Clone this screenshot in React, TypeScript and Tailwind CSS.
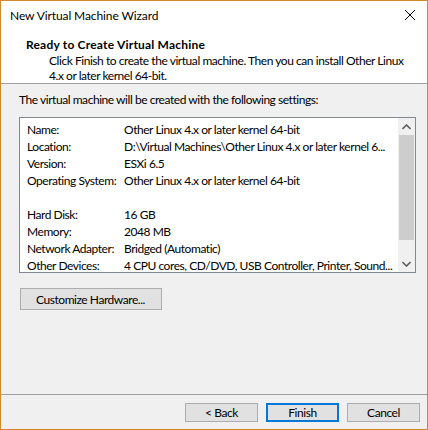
import React from "react";

const rows: [string, string][] = [
  ["Name:", "Other Linux 4.x or later kernel 64-bit"],
  ["Location:", "D:\\Virtual Machines\\Other Linux 4.x or later kernel 6..."],
  ["Version:", "ESXi 6.5"],
  ["Operating System:", "Other Linux 4.x or later kernel 64-bit"],
  ["", ""],
  ["Hard Disk:", "16 GB"],
  ["Memory:", "2048 MB"],
  ["Network Adapter:", "Bridged (Automatic)"],
  ["Other Devices:", "4 CPU cores, CD/DVD, USB Controller, Printer, Sound..."],
];

export default function App() {
  return (
    <div
      className="w-[428px] h-[430px] border border-[#cf8a2e] bg-[#f0f0f0] flex flex-col text-[12px] text-black tracking-[-0.45px]"
      style={{ fontFamily: '"Segoe UI", Lato, "Noto Sans", sans-serif' }}
    >
      <div className="bg-white border-b border-[#a0a0a0] h-[83px] flex flex-col">
        <div className="h-[29px] flex items-center justify-between pl-[9px] pr-[9px]">
          <span className="leading-[15px] tracking-[-0.1px]">New Virtual Machine Wizard</span>
          <svg width="12" height="12" viewBox="0 0 12 12" className="mr-[2px]">
            <path d="M1 1 L11 11 M11 1 L1 11" stroke="#000" strokeWidth="1" />
          </svg>
        </div>
        <div className="pl-[25px] mt-[8px] font-bold leading-[15px] tracking-[0.2px]">Ready to Create Virtual Machine</div>
        <div className="pl-[48px] pr-[20px] leading-[15px] mt-[1px]">
          Click Finish to create the virtual machine. Then you can install Other Linux 4.x or later kernel 64-bit.
        </div>
      </div>
      <div className="pl-[18px] mt-[8px] leading-[15px]">The virtual machine will be created with the following settings:</div>
      <div className="ml-[18px] mr-[11px] mt-[10px] h-[156px] border border-[#828790] bg-white flex">
        <div className="flex-1 pt-[3px] pl-[7px] overflow-hidden">
          {rows.map(([k, v], i) => (
            <div key={i} className="h-[17px] flex items-center leading-[15px] whitespace-nowrap">
              <span className="w-[97px] shrink-0">{k}</span>
              <span>{v}</span>
            </div>
          ))}
        </div>
        <div className="w-[17px] bg-[#f0f0f0] flex flex-col">
          <div className="h-[17px] flex items-center justify-center">
            <svg width="9" height="6" viewBox="0 0 9 6">
              <path d="M0.5 5 L4.5 1 L8.5 5" stroke="#606060" strokeWidth="1.6" fill="none" />
            </svg>
          </div>
          <div className="h-[105px] mx-[1px] bg-[#cdcdcd]" />
          <div className="flex-1" />
          <div className="h-[17px] flex items-center justify-center">
            <svg width="9" height="6" viewBox="0 0 9 6">
              <path d="M0.5 1 L4.5 5 L8.5 1" stroke="#606060" strokeWidth="1.6" fill="none" />
            </svg>
          </div>
        </div>
      </div>
      <div className="ml-[19px] mt-[15px]">
        <button className="w-[142px] h-[22px] border border-[#adadad] bg-[#e1e1e1] flex items-center pl-[15px] leading-[15px] whitespace-nowrap">
          Customize Hardware...
        </button>
      </div>
      <div className="flex-1" />
      <div className="border-t border-[#a0a0a0] h-[35px] flex items-start justify-end gap-[8px] pr-[7px] pt-[8px]">
        <button className="w-[73px] h-[19px] border border-[#adadad] bg-[#e1e1e1] leading-[15px] flex items-center justify-center">
          &lt; Back
        </button>
        <button className="w-[73px] h-[19px] border-2 border-[#0078d7] bg-[#e1e1e1] leading-[15px] flex items-center justify-center">
          Finish
        </button>
        <button className="w-[73px] h-[19px] border border-[#adadad] bg-[#e1e1e1] leading-[15px] flex items-center justify-center">
          Cancel
        </button>
      </div>
    </div>
  );
}
